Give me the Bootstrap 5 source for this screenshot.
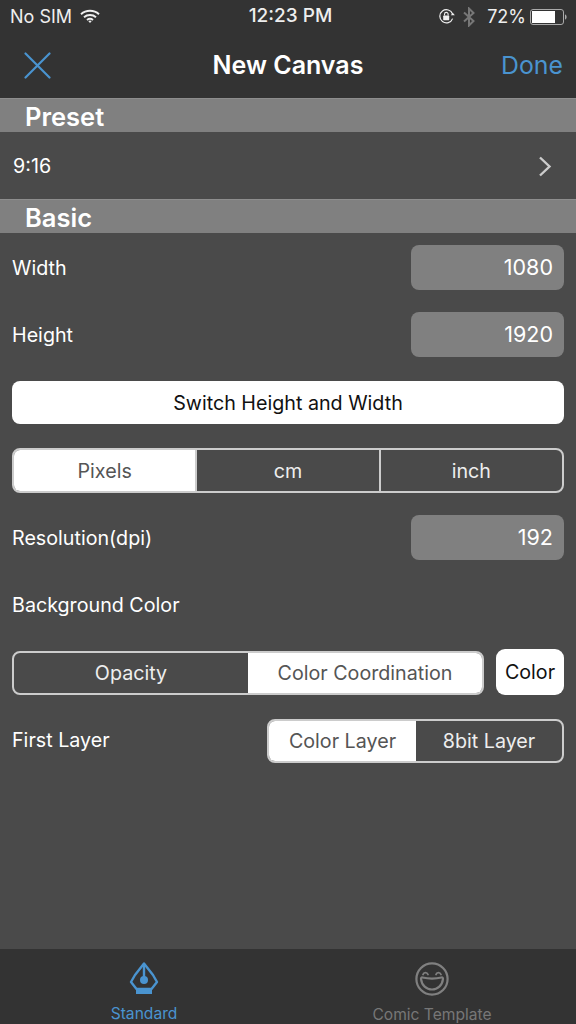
<!DOCTYPE html>
<html lang="en">
<head>
  <meta charset="UTF-8" />
  <meta name="viewport" content="width=device-width, initial-scale=1.0"/>
  <title>New Canvas</title>
  <link href="https://cdn.jsdelivr.net/npm/bootstrap@5.3.0/dist/css/bootstrap.min.css" rel="stylesheet">
  <style>
    html, body { height: 100%; }
    body { width: 576px; height: 1024px; background: #4a4a4a; color: #fff; font-family: Inter, "Liberation Sans", sans-serif; font-size: 19.7px; overflow: hidden; }
    .screen { height: 1024px; }
    .top-area { height: 98px; background: #333; }
    .status-bar { height: 33px; padding: 0 9px 0 10px; font-size: 18px; color: #eee; }
    .status-time { font-size: 19px; font-weight: 500; margin-left: 4px; }
    .status-left, .status-right { width: 180px; }
    .nav-line { height: 65px; padding: 0 13px 0 24px; }
    .nav-title { font-size: 25px; font-weight: 600; }
    .nav-done { font-size: 24.8px; color: #4a94d0; width: 111px; text-align: right; }
    .nav-close { width: 100px; }
    .sec-head { height: 34px; background: #808080; border-top: 1px solid #8e8e8e; padding-left: 25px; font-size: 25.5px; font-weight: 600; line-height: 35px; }
    .preset-row { height: 67px; padding: 2px 24px 0 13px; }
    .form-area { padding: 12px 12px 0 12px; }
    .num-box { width: 153px; height: 45px; background: #808080; border-radius: 8px; padding-right: 11px; font-size: 21.5px; line-height: 44px; text-align: right; }
    .field-row { height: 45px; margin-bottom: 22px; }
    .field-label { padding-top: 2px; }
    .switch-btn { height: 43px; background: #fff; color: #111; border-radius: 8px; line-height: 44px; text-align: center; margin: 24px 0 24px; }
    .seg { display: flex; height: 45px; border: 2px solid #ccc; border-radius: 8px; overflow: hidden; }
    .seg-item { display: flex; align-items: center; justify-content: center; padding-top: 2px; color: #eee; border-left: 2px solid #ccc; }
    .seg-item:first-child { border-left: 0; }
    .seg-item.picked { background: #fff; color: #555; }
    .unit-seg { margin-bottom: 22px; }
    .unit-seg .seg-item { flex: 1 1 0; }
    .bg-label { height: 45px; margin-bottom: 23px; padding-top: 2px; }
    .bg-row { height: 45px; margin-bottom: 24px; }
    .bg-seg { width: 472px; height: 44px; margin-top: 1px; }
    .bg-seg .seg-item:first-child { width: 234px; }
    .bg-seg .seg-item:last-child { flex: 1; border-left: 0; }
    .color-btn { width: 68px; height: 46px; margin-top: -1px; background: #fff; color: #111; border-radius: 9px; line-height: 46px; text-align: center; }
    .layer-seg { width: 297px; height: 44px; }
    .layer-seg .seg-item:first-child { width: 147px; }
    .layer-seg .seg-item:last-child { flex: 1; border-left: 0; }
    .form-area-fill { flex: 1; }
    .tab-bar { height: 75px; background: #333; }
    .tab-item { width: 288px; height: 75px; font-size: 15.6px; color: #777; padding-top: 13px; }
    .tab-item svg { display: block; }
    .tab-icon-box { height: 34px; }
    .tab-item span { margin-top: 9px; line-height: 20px; }
    .tab-item.active { color: #4a94d0; }
  </style>
</head>
<body>
<div class="screen d-flex flex-column">

  <!-- status bar + nav -->
  <div class="top-area">
    <div class="status-bar d-flex align-items-center justify-content-between">
      <div class="status-left d-flex align-items-center gap-2">
        <span>No SIM</span>
        <svg width="20" height="15" viewBox="0 0 20 15" fill="none" stroke="#eee" stroke-width="1.9">
          <path d="M1 5.2C6 .6 14 .6 19 5.2"/>
          <path d="M4 8.2C7.3 5.2 12.7 5.2 16 8.2"/>
          <path d="M7 11C8.7 9.6 11.3 9.6 13 11"/>
          <path d="M8.4 12.2L10 14l1.6-1.8C10.6 11.4 9.4 11.4 8.4 12.2Z" fill="#eee" stroke="none"/>
        </svg>
      </div>
      <div class="status-time">12:23 PM</div>
      <div class="status-right d-flex align-items-center justify-content-end">
        <svg width="17" height="17" viewBox="0 0 17 17" fill="none">
          <path d="M14.6 10.6A6.6 6.6 0 1 1 14.6 6" stroke="#eee" stroke-width="1.2"/>
          <path d="M12.8 7.2h4l-2-2.4Z" fill="#eee"/>
          <rect x="5.2" y="7.6" width="6" height="4.6" rx=".6" fill="#eee"/>
          <path d="M6.5 7.6V6.2a1.8 1.8 0 0 1 3.6 0v1.4" stroke="#eee" stroke-width="1.1"/>
        </svg>
        <svg class="ms-2 me-1" width="12" height="20" viewBox="0 0 12 20" fill="none" stroke="#777" stroke-width="2">
          <path d="M1 5.5L10.5 14 6 18.5V1.5L10.5 6 1 14.5"/>
        </svg>
        <span class="ms-2">72%</span>
        <svg class="ms-1" width="37" height="16" viewBox="0 0 37 16" fill="none">
          <rect x=".5" y=".5" width="33" height="15" rx="2.5" stroke="#aaa"/>
          <rect x="2" y="2" width="23" height="12" fill="#fff"/>
          <path d="M35 5.5c1.2.3 1.6 1.3 1.6 2.5s-.4 2.2-1.6 2.5Z" fill="#aaa"/>
        </svg>
      </div>
    </div>
    <div class="nav-line d-flex align-items-center justify-content-between">
      <div class="nav-close">
        <svg class="d-block" width="27" height="27" viewBox="0 0 27 27" stroke="#4a94d0" stroke-width="2.2" stroke-linecap="round">
          <path d="M1.5 1.5L25.5 25.5M25.5 1.5L1.5 25.5"/>
        </svg>
      </div>
      <div class="nav-title">New Canvas</div>
      <div class="nav-done">Done</div>
    </div>
  </div>

  <div class="sec-head">Preset</div>
  <div class="preset-row d-flex align-items-center justify-content-between">
    <span>9:16</span>
    <svg width="14" height="21" viewBox="0 0 14 21" fill="none" stroke="#ccc" stroke-width="2.4">
      <path d="M2 1.5L11.5 10.5 2 19.5"/>
    </svg>
  </div>

  <div class="sec-head">Basic</div>
  <div class="form-area form-area-fill">
    <div class="field-row d-flex align-items-center justify-content-between">
      <span class="field-label">Width</span>
      <div class="num-box">1080</div>
    </div>
    <div class="field-row d-flex align-items-center justify-content-between mb-0">
      <span class="field-label">Height</span>
      <div class="num-box">1920</div>
    </div>

    <div class="switch-btn">Switch Height and Width</div>

    <div class="seg unit-seg">
      <div class="seg-item picked">Pixels</div>
      <div class="seg-item">cm</div>
      <div class="seg-item">inch</div>
    </div>

    <div class="field-row d-flex align-items-center justify-content-between">
      <span class="field-label">Resolution(dpi)</span>
      <div class="num-box">192</div>
    </div>

    <div class="bg-label d-flex align-items-center">Background Color</div>

    <div class="bg-row d-flex justify-content-between">
      <div class="seg bg-seg">
        <div class="seg-item">Opacity</div>
        <div class="seg-item picked">Color Coordination</div>
      </div>
      <div class="color-btn">Color</div>
    </div>

    <div class="d-flex align-items-center justify-content-between">
      <span>First Layer</span>
      <div class="seg layer-seg">
        <div class="seg-item picked">Color Layer</div>
        <div class="seg-item">8bit Layer</div>
      </div>
    </div>
  </div>

  <!-- bottom tabs -->
  <div class="tab-bar d-flex">
    <div class="tab-item active d-flex flex-column align-items-center">
      <div class="tab-icon-box">
        <svg width="30" height="32" viewBox="0 0 30 32" fill="none" stroke="#4a94d0" stroke-width="2.4">
          <path d="M15 1.5L24 13 28 20 22.5 27H7.5L2 20 6 13Z" stroke-linejoin="round"/>
          <path d="M15 3V17"/>
          <circle cx="15" cy="18" r="4" fill="#4a94d0" stroke="none"/>
          <rect x="7" y="26" width="16" height="6" fill="#4a94d0" stroke="none"/>
        </svg>
      </div>
      <span>Standard</span>
    </div>
    <div class="tab-item d-flex flex-column align-items-center">
      <div class="tab-icon-box">
        <svg width="34" height="34" viewBox="0 0 34 34" fill="none" stroke="#808080" stroke-width="2.2">
          <circle cx="17" cy="17" r="15.6"/>
          <path d="M8 12.5c.8-2.6 4-2.6 5 0M21 12.5c.8-2.6 4-2.6 5 0" stroke-width="1.8" stroke-linecap="round"/>
          <path d="M7.5 15.5c5.5 1.3 13.500 1.300 19 0 1-.2 1.600.4 1.500 1.400C27.300 23.500 22.600 27.500 17 27.500S6.700 23.500 6 16.900c-.1-1 .5-1.600 1.500-1.400Z"/>
        </svg>
      </div>
      <span>Comic Template</span>
    </div>
  </div>
</div>
<script src="https://cdn.jsdelivr.net/npm/bootstrap@5.3.0/dist/js/bootstrap.bundle.min.js"></script>
</body>
</html>
